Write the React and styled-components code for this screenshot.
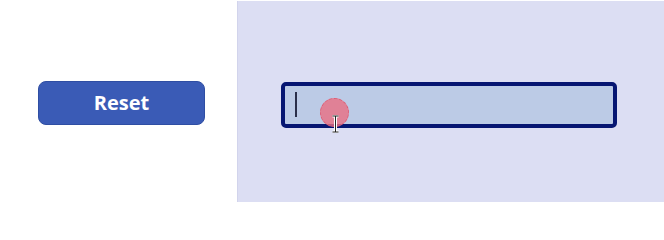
import styled, { createGlobalStyle } from 'styled-components';

const GlobalStyle = createGlobalStyle`
  html, body {
    margin: 0;
    padding: 0;
    background: #ffffff;
    font-family: "Open Sans", "Noto Sans", sans-serif;
  }
`;

const Page = styled.div`
  display: flex;
  width: 664px;
  height: 202px;
`;

const LeftPane = styled.div`
  width: 237px;
  display: flex;
  align-items: center;
  padding-left: 38px;
  padding-top: 3px;
  box-sizing: border-box;
`;

const ResetButton = styled.button`
  width: 167px;
  height: 44px;
  border: 1px solid #2f4ea3;
  border-radius: 8px;
  background: #3a5bb6;
  color: #ffffff;
  font-family: "Open Sans", "Noto Sans", sans-serif;
  font-size: 20px;
  font-weight: 700;
  padding: 0;
  cursor: pointer;
`;

const RightPane = styled.div`
  flex: 1;
  margin-top: 1px;
  background: #dcdef3;
  border-left: 1px solid #d2d4ec;
  display: flex;
  align-items: center;
  padding-left: 43px;
  padding-top: 6px;
`;

const Field = styled.div`
  position: relative;
  width: 336px;
  height: 46px;
  box-sizing: border-box;
  border: 4px solid #061672;
  border-radius: 5px;
  background: #bccbe6;
`;

const Caret = styled.span`
  position: absolute;
  left: 10px;
  top: 6px;
  width: 1.5px;
  height: 25px;
  background: #2a2f4a;
`;

const ClickMark = styled.span`
  position: absolute;
  left: 35px;
  top: 12px;
  width: 29px;
  height: 29px;
  box-sizing: border-box;
  border-radius: 50%;
  background: rgba(232, 110, 130, 0.8);
  border: 1.5px dashed #de5d73;
`;

const Pointer = styled.svg`
  position: absolute;
  left: 46px;
  top: 29px;
`;

export default function App() {
  return (
    <>
      <GlobalStyle />
      <Page>
        <LeftPane>
          <ResetButton>Reset</ResetButton>
        </LeftPane>
        <RightPane>
          <Field>
            <Caret />
            <ClickMark />
            <Pointer width="9" height="18" viewBox="0 0 9 18">
              <path d="M1.5 1 H7.5 M4.5 1 V17 M1.5 17 H7.5" stroke="#ffffff" strokeWidth="3" fill="none" />
              <path d="M1.5 1 H7.5 M4.5 1 V17 M1.5 17 H7.5" stroke="#222222" strokeWidth="1" fill="none" />
            </Pointer>
          </Field>
        </RightPane>
      </Page>
    </>
  );
}
